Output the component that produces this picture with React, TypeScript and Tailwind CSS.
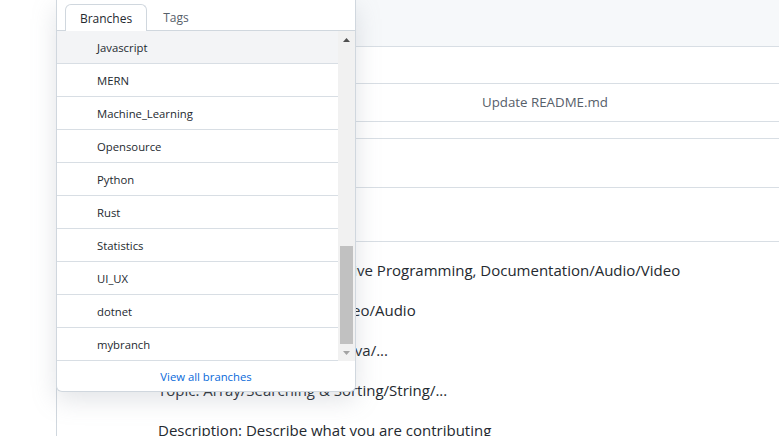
import React from "react";

const branches = [
  "Javascript",
  "MERN",
  "Machine_Learning",
  "Opensource",
  "Python",
  "Rust",
  "Statistics",
  "UI_UX",
  "dotnet",
  "mybranch",
];

const font = { fontFamily: '"Segoe UI", "Open Sans", "Noto Sans", sans-serif' };

export default function App() {
  return (
    <div className="relative w-[779px] h-[436px] overflow-hidden bg-white" style={font}>
      {/* background repo content */}
      <div className="ml-[56px] border-l border-[#d0d7de] h-full flex flex-col">
        <div className="shrink-0 h-[47px] bg-[#f6f8fa] border-b border-[#d8dee4]" />
        <div className="shrink-0 h-[37px] border-b border-[#d8dee4]" />
        <div className="shrink-0 h-[38px] border-b border-[#d8dee4] flex items-center pl-[425px] text-[13.3px] text-[#57606a]">
          Update README.md
        </div>
        <div className="shrink-0 h-[17px] border-b border-[#d8dee4]" />
        <div className="shrink-0 h-[49px] border-b border-[#d8dee4]" />
        <div className="shrink-0 h-[54px] border-b border-[#d8dee4]" />
        <div className="shrink-0 pl-[101px] pt-[16px] text-[15px] text-[#24292f] flex flex-col">
          <div className="h-[40px] leading-[24px] whitespace-nowrap">Category/Domain: Competitive Programming, Documentation/Audio/Video</div>
          <div className="h-[40px] leading-[24px] whitespace-nowrap">Type: Code/Blogs/Slides/Video/Audio</div>
          <div className="h-[40px] leading-[24px] whitespace-nowrap">Languages: C/C++/Python/Java/...</div>
          <div className="h-[40px] leading-[24px] whitespace-nowrap">Topic: Array/Searching &amp; Sorting/String/...</div>
          <div className="h-[40px] leading-[24px] whitespace-nowrap">Description: Describe what you are contributing</div>
        </div>
      </div>

      {/* branch dropdown */}
      <div className="absolute left-[56px] top-0 w-[300px] h-[392px] bg-white border border-t-0 border-[#d0d7de] rounded-b-[6px] shadow-[0_8px_24px_rgba(140,149,159,0.25)] flex flex-col">
        <div className="shrink-0 h-[31px] border-b border-[#d0d7de] flex items-end pl-[8px] text-[12px] text-[#24292f]">
          <div className="w-[82px] h-[27px] -mb-px bg-white border border-b-0 border-[#d0d7de] rounded-t-[6px] flex items-center justify-center font-medium pt-[2px]">
            Branches
          </div>
          <div className="w-[58px] h-[27px] flex items-center justify-center text-[#57606a] font-medium pt-[2px]">Tags</div>
        </div>
        <div className="shrink-0 flex h-[330px]">
          <div className="flex-1 flex flex-col">
            {branches.map((b, i) => (
              <div
                key={b}
                className={`shrink-0 h-[33px] border-b border-[#d8dee4] flex items-center pl-[40px] text-[11.3px] text-[#24292f] pt-[2px] ${i === 0 ? "bg-[#f3f4f6]" : ""}`}
              >
                {b}
              </div>
            ))}
          </div>
          <div className="w-[17px] bg-[#f1f1f1] flex flex-col items-center">
            <div className="h-[17px] w-full flex items-center justify-center">
              <svg width="7" height="4" viewBox="0 0 7 4"><path d="M0 4 L3.5 0 L7 4 Z" fill="#505050" /></svg>
            </div>
            <div className="flex-1" />
            <div className="h-[98px] w-[13px] bg-[#c1c1c1]" />
            <div className="h-[17px] w-full flex items-center justify-center">
              <svg width="7" height="4" viewBox="0 0 7 4"><path d="M0 0 L3.5 4 L7 0 Z" fill="#a3a3a3" /></svg>
            </div>
          </div>
        </div>
        <div className="flex-1 flex items-center justify-center text-[11.3px] text-[#0969da] pt-[2px]">
          View all branches
        </div>
      </div>
    </div>
  );
}
